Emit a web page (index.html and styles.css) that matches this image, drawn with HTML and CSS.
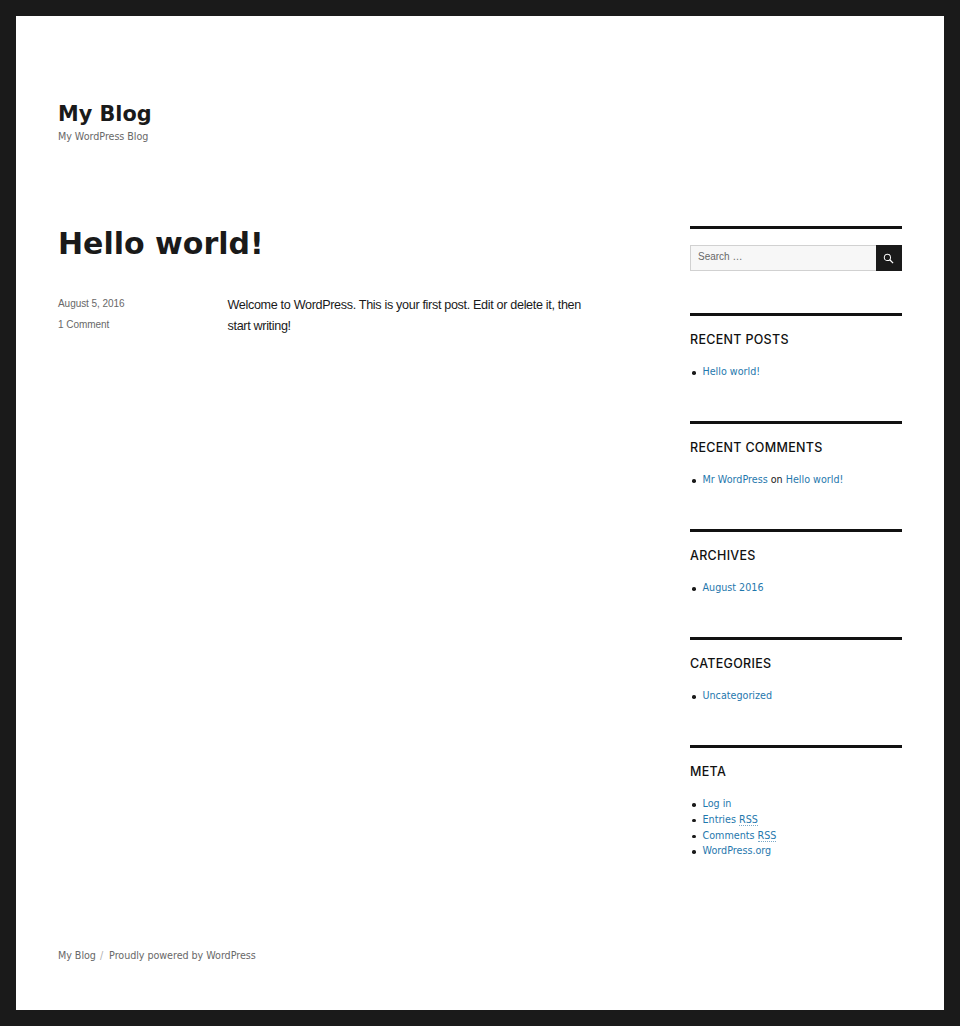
FILE: index.html
```html
<!DOCTYPE html>
<html lang="en">
<head>
<meta charset="utf-8">
<title>My Blog</title>
<link rel="stylesheet" href="styles.css">
</head>
<body>
<div class="site">
  <header class="site-header">
    <p class="site-title">My Blog</p>
    <p class="site-description">My WordPress Blog</p>
  </header>
  <div class="site-content">
    <main class="main">
      <h1 class="entry-title">Hello world!</h1>
      <div class="entry">
        <div class="entry-meta">
          <p class="meta-line">August 5, 2016</p>
          <p class="meta-line">1 Comment</p>
        </div>
        <p class="entry-text">Welcome to WordPress. This is your first post. Edit or delete it, then start writing!</p>
      </div>
    </main>
    <aside class="sidebar">
      <section class="widget widget-search">
        <form class="search">
          <div class="search-input">Search …</div>
          <button class="search-btn" type="button" aria-label="Search">
            <svg width="11" height="11" viewBox="0 0 12 12" fill="none" stroke="#fff" stroke-width="1.1"><circle cx="4.8" cy="4.8" r="3.4"/><path d="M7.4 7.4 11 11" stroke-width="1.4"/></svg>
          </button>
        </form>
      </section>
      <section class="widget">
        <h2 class="widget-title">Recent Posts</h2>
        <ul class="list"><li><a href="#">Hello world!</a></li></ul>
      </section>
      <section class="widget">
        <h2 class="widget-title">Recent Comments</h2>
        <ul class="list"><li><a href="#">Mr WordPress</a> on <a href="#">Hello world!</a></li></ul>
      </section>
      <section class="widget">
        <h2 class="widget-title">Archives</h2>
        <ul class="list"><li><a href="#">August 2016</a></li></ul>
      </section>
      <section class="widget">
        <h2 class="widget-title">Categories</h2>
        <ul class="list"><li><a href="#">Uncategorized</a></li></ul>
      </section>
      <section class="widget">
        <h2 class="widget-title">Meta</h2>
        <ul class="list">
          <li><a href="#">Log in</a></li>
          <li><a href="#">Entries <abbr class="abbr">RSS</abbr></a></li>
          <li><a href="#">Comments <abbr class="abbr">RSS</abbr></a></li>
          <li><a href="#">WordPress.org</a></li>
        </ul>
      </section>
    </aside>
  </div>
  <footer class="site-footer">
    <span>My Blog</span><span class="sep">/</span><span>Proudly powered by WordPress</span>
  </footer>
</div>
</body>
</html>
```
FILE: styles.css
```css
* { box-sizing: border-box; }
html, body { margin: 0; padding: 0; height: 100%; }
body { background: #1a1a1a; padding: 16px; color: #1a1a1a; font-family: "DejaVu Sans", sans-serif; }
.site { background: #fff; height: 994px; padding: 0 42px; display: flex; flex-direction: column; }
p { margin: 0; }
.site-header { padding-top: 84px; height: 210px; }
.site-title { font-size: 20.8px; font-weight: 700; line-height: 28px; }
.site-description { font-size: 9.6px; letter-spacing: -0.05px; line-height: 14px; color: #686868; margin-top: 2px; }
.site-content { display: flex; justify-content: space-between; flex: 1; }
.main { width: 540px; }
.entry-title { font-size: 30px; font-weight: 700; line-height: 36px; margin: 0 0 33px; }
.entry { display: flex; }
.entry-meta { width: 169.5px; flex: none; font-family: "Liberation Sans", sans-serif; font-size: 10px; letter-spacing: -0.05px; color: #686868; padding-top: 1px; }
.meta-line { line-height: 16px; margin-bottom: 5px; }
.entry-text { font-family: "Liberation Sans", sans-serif; font-size: 12.6px; line-height: 21px; letter-spacing: -0.33px; width: 370px; }
.sidebar { width: 211.5px; flex: none; margin-right: 0.5px; }
.widget { border-top: 3px solid #111; padding-top: 16px; height: 108px; }
.search { display: flex; height: 26px; }
.widget-search { height: 87px; }
.search-input { flex: 1; background: #f7f7f7; border: 1px solid #d1d1d1; border-right: 0; font-family: "Liberation Sans", sans-serif; font-size: 10px; line-height: 21px; padding-left: 7px; color: #686868; }
.search-btn { width: 26px; background: #1a1a1a; border: 0; padding: 0; display: flex; align-items: center; justify-content: center; }
.widget-title { font-family: "Inter", sans-serif; font-size: 12.5px; font-weight: 500; letter-spacing: 0.3px; line-height: 16px; text-transform: uppercase; margin: 0 0 16px; color: #111; }
.list { list-style: none; margin: 0; padding: 0 0 0 12.5px; font-size: 9.6px; line-height: 15.75px; }
.list li { position: relative; }
.list li::before { content: ""; position: absolute; left: -10.5px; top: 7px; width: 3.5px; height: 3.5px; border-radius: 50%; background: #1a1a1a; }
a { color: #1f78ad; text-decoration: none; }
.abbr { border-bottom: 1px dotted #7aa9c8; }
.site-footer { height: 61px; font-size: 9.6px; letter-spacing: -0.05px; line-height: 14px; color: #686868; }
.sep { margin: 0 6px 0 4px; color: #b0b0b0; }
```
